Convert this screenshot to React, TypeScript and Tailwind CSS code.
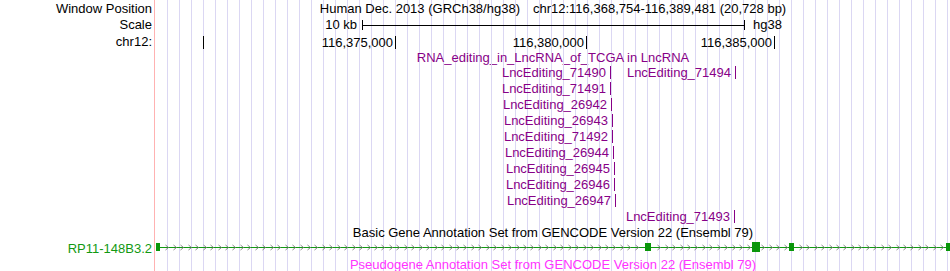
import type { ReactNode } from "react";

// data area starts at x=156 (154 = pink separator, 155 = blank)
const X0 = 156;
const W = 794;
const PURPLE = "#870087";

const rel = (x: number) => x - X0;

interface Hit {
  name: string;
  x: number;
}

const lncRows: Hit[][] = [
  [
    { name: "LncEditing_71490", x: 610 },
    { name: "LncEditing_71494", x: 735 },
  ],
  [{ name: "LncEditing_71491", x: 610 }],
  [{ name: "LncEditing_26942", x: 611 }],
  [{ name: "LncEditing_26943", x: 612 }],
  [{ name: "LncEditing_71492", x: 612 }],
  [{ name: "LncEditing_26944", x: 613 }],
  [{ name: "LncEditing_26945", x: 614 }],
  [{ name: "LncEditing_26946", x: 614 }],
  [{ name: "LncEditing_26947", x: 615 }],
  [{ name: "LncEditing_71493", x: 734 }],
];

const rulerTicks = [
  { x: 203, label: "" },
  { x: 395, label: "116,375,000" },
  { x: 586, label: "116,380,000" },
  { x: 774, label: "116,385,000" },
];

const exons = [
  { a: 156, b: 159, big: false },
  { a: 645, b: 650, big: false },
  { a: 752, b: 759, big: true },
  { a: 789, b: 793, big: false },
  { a: 946, b: 950, big: false },
];

interface RowProps {
  h: string;
  label?: string;
  labelClass?: string;
  children?: ReactNode;
}

const Row = ({ h, label, labelClass = "text-black", children }: RowProps) => (
  <div className={`flex ${h}`}>
    <div className={`flex w-[154px] shrink-0 items-center justify-end pr-[2px] ${labelClass}`}>
      {label}
    </div>
    <div className="w-px shrink-0 bg-[#ffb2b2]" />
    <div className="w-px shrink-0" />
    <div className="relative w-[794px] shrink-0 bg-[image:repeating-linear-gradient(to_right,transparent_0px,transparent_11px,#dbd7f3_11px,#dbd7f3_12px)]">
      {children}
    </div>
  </div>
);

const Centered = ({ text, className = "" }: { text: string; className?: string }) => (
  <div className={`flex h-full items-center justify-center whitespace-pre ${className}`}>{text}</div>
);

const Feature = ({ hit }: { hit: Hit }) => (
  <div
    className="absolute top-0 flex h-full items-center gap-[4px]"
    style={{ right: W - rel(hit.x) - 1 }}
  >
    <span>{hit.name}</span>
    <span className="h-[13px] w-px bg-[#870087]" />
  </div>
);

const GeneModel = () => {
  const chevrons: number[] = [];
  for (let x = 161; x < 950; x += 7.45) {
    const cx = Math.round(x);
    if (exons.some((e) => cx >= e.a - 1 && cx - 3 <= e.b + 1)) continue;
    chevrons.push(cx);
  }
  return (
    <svg width={W} height={16} className="absolute left-0 top-0">
      <rect x={0} y={7} width={W} height={1} fill="#119911" />
      {chevrons.map((cx) => (
        <polyline
          key={cx}
          points={`${rel(cx) - 2.5},5 ${rel(cx) + 0.5},7.5 ${rel(cx) - 2.5},10`}
          fill="none"
          stroke="#7a7a7a"
          strokeWidth={0.9}
        />
      ))}
      {exons.map((e) => (
        <rect
          key={e.a}
          x={rel(e.a)}
          y={e.big ? 2 : 3}
          width={e.b - e.a + 1}
          height={e.big ? 10 : 8}
          fill="#0a960a"
        />
      ))}
    </svg>
  );
};

export default function App() {
  return (
    <div className="h-[271px] w-[950px] overflow-hidden bg-white font-['Liberation_Sans',Arial,sans-serif] text-[13px] leading-none text-black">
      <Row h="h-[16px]" label="Window Position">
        <div className="flex h-full items-center justify-center gap-[13px] whitespace-pre">
          <span>Human Dec. 2013 (GRCh38/hg38)</span>
          <span>chr12:116,368,754-116,389,481 (20,728 bp)</span>
        </div>
      </Row>

      <Row h="h-[17px]" label="Scale">
        <div
          className="absolute top-0 flex h-full items-center"
          style={{ right: W - rel(357) }}
        >
          10 kb
        </div>
        <div
          className="absolute top-[4px] flex h-[10px] items-center"
          style={{ left: rel(362), width: 744 - 362 + 1 }}
        >
          <div className="h-full w-px bg-black" />
          <div className="h-px flex-1 bg-black" />
          <div className="h-full w-px bg-black" />
        </div>
        <div className="absolute top-0 flex h-full items-center" style={{ left: rel(753) }}>
          hg38
        </div>
      </Row>

      <Row h="h-[17px]" label="chr12:">
        {rulerTicks.map((t) => (
          <div key={t.x}>
            {t.label && (
              <div
                className="absolute top-0 flex h-full items-center pt-[1px]"
                style={{ right: W - rel(t.x) + 2 }}
              >
                {t.label}
              </div>
            )}
            <div className="absolute top-[3px] h-[13px] w-px bg-black" style={{ left: rel(t.x) }} />
          </div>
        ))}
      </Row>

      <Row h="h-[14px]">
        <Centered text="RNA_editing_in_LncRNA_of_TCGA in LncRNA" className="text-[#870087]" />
      </Row>

      {lncRows.map((row, i) => (
        <Row key={i} h="h-[16px]">
          <div className="h-full text-[#870087]">
            {row.map((hit) => (
              <Feature key={hit.name} hit={hit} />
            ))}
          </div>
        </Row>
      ))}

      <Row h="h-[16px]">
        <Centered text="Basic Gene Annotation Set from GENCODE Version 22 (Ensembl 79)" />
      </Row>

      <Row h="h-[16px]" label="RP11-148B3.2" labelClass="text-[#129912]">
        <GeneModel />
      </Row>

      <Row h="h-[16px]">
        <Centered text="Pseudogene Annotation Set from GENCODE Version 22 (Ensembl 79)" className="text-[#ff33ff]" />
      </Row>
    </div>
  );
}
